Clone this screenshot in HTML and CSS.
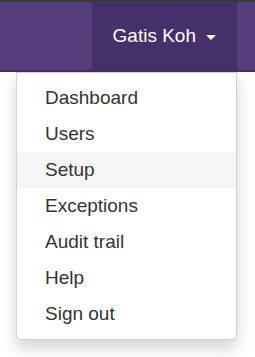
FILE: index.html
```html
<!DOCTYPE html>
<html lang="en">
<head>
  <meta charset="UTF-8">
  <meta name="viewport" content="width=device-width, initial-scale=1.0">
  <title>Gatis Koh</title>
  <link rel="stylesheet" href="styles.css">
</head>
<body>

  <div class="topLine"></div>

  <nav class="navbar">
    <div class="userMenu">
      <a href="#" class="userMenu__toggle">Gatis Koh <span class="caret"></span></a>

      <ul class="dropdown">
        <li><a href="#" class="dropdown__item">Dashboard</a></li>
        <li><a href="#" class="dropdown__item">Users</a></li>
        <li><a href="#" class="dropdown__item hover">Setup</a></li>
        <li><a href="#" class="dropdown__item">Exceptions</a></li>
        <li><a href="#" class="dropdown__item">Audit trail</a></li>
        <li><a href="#" class="dropdown__item">Help</a></li>
        <li><a href="#" class="dropdown__item">Sign out</a></li>
      </ul>
    </div>
  </nav>

</body>
</html>
```

FILE: styles.css
```css
* {
  box-sizing: border-box;
  padding: 0;
  margin: 0;
}
body {
  font-family: "Liberation Sans", Arial, sans-serif;
  background-color: #fff;
  height: 100vh;
}
a {
  text-decoration: none;
}
ul {
  list-style: none;
}
.topLine {
  height: 2px;
  background-color: #3a3a3a;
}
.navbar {
  display: flex;
  justify-content: flex-end;
  height: 70px;
  padding-right: 18px;
  background-color: #563d7c;
  border-bottom: 2px solid #452f66;
}
.userMenu {
  position: relative;
  display: flex;
}
.userMenu__toggle {
  display: flex;
  align-items: center;
  padding: 0 21px;
  color: #fff;
  font-size: 19px;
  background-color: #46306a;
}
.caret {
  display: inline-block;
  width: 0;
  height: 0;
  margin-left: 10px;
  margin-top: 2px;
  border-top: 5px solid #fff;
  border-left: 5px solid transparent;
  border-right: 5px solid transparent;
}
.dropdown {
  position: absolute;
  top: 70px;
  right: 0;
  width: 221px;
  padding: 7px 0;
  background-color: #fff;
  border: 1px solid rgba(0, 0, 0, .18);
  border-radius: 0 0 5px 5px;
  box-shadow: 0 8px 16px rgba(0, 0, 0, .175);
}
.dropdown__item {
  display: block;
  height: 36px;
  line-height: 36px;
  padding: 0 28px;
  color: #333;
  font-size: 19px;
}
.dropdown__item.hover,
.dropdown__item:hover {
  background-color: #f5f5f5;
}
```
